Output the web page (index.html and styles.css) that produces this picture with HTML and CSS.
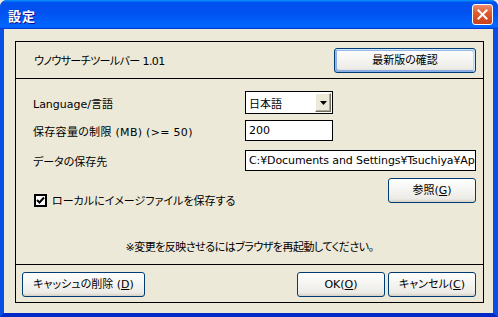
FILE: index.html
```html
<!DOCTYPE html>
<html lang="ja">
<head>
<meta charset="utf-8">
<link rel="stylesheet" href="styles.css">
</head>
<body>
<div class="window">
  <div class="titlebar">
    <span class="title">設定</span>
    <span class="close">
      <svg width="11" height="11" viewBox="0 0 11 11"><path d="M1.5 1.5 L9.5 9.5 M9.5 1.5 L1.5 9.5" stroke="#fff" stroke-width="2" stroke-linecap="square"/></svg>
    </span>
  </div>
  <div class="body">
    <div class="panel">
      <div class="sec sec-top">
        <span class="version">ウノウサーチツールバー 1.01</span>
        <button class="btn btn-default btn-check">最新版の確認</button>
      </div>
      <div class="sec sec-mid">
        <div class="row row-lang">
          <span class="label">Language/言語</span>
          <div class="select">
            <span class="select-text">日本語</span>
            <span class="select-arrow"><svg width="7" height="4" viewBox="0 0 7 4"><path d="M0 0 H7 L3.5 4 Z" fill="#000"/></svg></span>
          </div>
        </div>
        <div class="row row-size">
          <span class="label">保存容量の制限 (MB) (&gt;= 50)</span>
          <div class="input input-short">200</div>
        </div>
        <div class="row row-path">
          <span class="label">データの保存先</span>
          <div class="input input-long">C:¥Documents and Settings¥Tsuchiya¥Ap</div>
        </div>
        <div class="row row-check">
          <label class="check">
            <span class="box"><svg width="9" height="9" viewBox="0 0 9 9"><path d="M1 4 L3.5 6.5 L8 1.5" stroke="#000" stroke-width="2" fill="none"/></svg></span>
            <span>ローカルにイメージファイルを保存する</span>
          </label>
          <button class="btn btn-ref">参照(<u>G</u>)</button>
        </div>
        <p class="note">※変更を反映させるにはブラウザを再起動してください。</p>
      </div>
      <div class="sec sec-bottom">
        <button class="btn btn-cache">キャッシュの削除 (<u>D</u>)</button>
        <div class="right-buttons">
          <button class="btn btn-std">OK(<u>O</u>)</button>
          <button class="btn btn-std">キャンセル(<u>C</u>)</button>
        </div>
      </div>
    </div>
  </div>
</div>
</body>
</html>
```
FILE: styles.css
```css
html, body {
  margin: 0;
  padding: 0;
  width: 498px;
  height: 317px;
  overflow: hidden;
  background: #ece9d8;
}
.window {
  width: 498px;
  height: 317px;
  display: flex;
  flex-direction: column;
  font-family: "DejaVu Sans", "Noto Sans CJK JP", sans-serif;
  font-size: 11px;
  font-feature-settings: "palt";
  color: #000;
  background: #0842d7;
  border-radius: 7px 7px 0 0;
  overflow: hidden;
}
.titlebar {
  height: 29px;
  flex: none;
  display: flex;
  align-items: center;
  justify-content: space-between;
  padding: 0 5px 0 8px;
  background: linear-gradient(180deg, #0997ff, #0053ee 8%, #0050ee 40%, #06f 88%, #06f 93%, #005bff 95%, #003dd7 96%, #003dd7);
}
.title {
  color: #fff;
  font-weight: bold;
  font-size: 13px;
  font-family: "Noto Sans CJK JP", sans-serif;
  text-shadow: 1px 1px #0f1089;
  letter-spacing: 1px;
  margin-top: 1px;
}
.close {
  width: 21px;
  height: 21px;
  box-sizing: border-box;
  border: 1px solid #fff;
  border-radius: 3px;
  background: linear-gradient(180deg, #ec8d6d, #dc5d30 40%, #c8411b 100%);
  display: flex;
  align-items: center;
  justify-content: center;
  margin-top: -1px;
}
.body {
  flex: 1;
  display: flex;
  flex-direction: column;
  background: #ece9d8;
  border-left: 4px solid #0a4fe4;
  border-right: 5px solid #0a4fe4;
  border-bottom: 4px solid #0029c6;
}
.panel {
  flex: 1;
  margin: 12px 9px 10px 11px;
  border: 1px solid #000;
  display: flex;
  flex-direction: column;
}
.sec-top {
  height: 36px;
  flex: none;
  display: flex;
  align-items: center;
  justify-content: space-between;
  padding: 0 7px 0 18px;
  border-bottom: 1px solid #000;
}
.version {
  margin-top: -1px;
  letter-spacing: -0.6px;
}
.btn {
  font: inherit;
  color: #000;
  box-sizing: border-box;
  height: 25px;
  border: 1px solid #003c74;
  border-radius: 3px;
  background: linear-gradient(180deg, #fff, #ecebe6 86%, #d6d0c5);
  padding: 0;
  margin: 0;
  line-height: 1;
}
.btn u {
  text-decoration: underline;
  text-underline-offset: 1px;
}
.btn-default {
  box-shadow: inset -1px 1px #cee7ff, inset 1px 2px #98b8ea, inset -2px 2px #bcd4f6, inset 1px -1px #89ade4, inset 2px -2px #89ade4;
}
.btn-check {
  width: 142px;
  margin-top: 1px;
}
.sec-mid {
  flex: 1;
  display: flex;
  flex-direction: column;
  padding: 12px 7px 0 17px;
  border-bottom: 1px solid #000;
}
.row {
  display: flex;
  align-items: center;
}
.label {
  width: 212px;
  flex: none;
}
.row-lang {
  height: 23px;
}
.row-size {
  height: 21px;
  margin-top: 6px;
}
.row-size .label {
  letter-spacing: 0.3px;
}
.row-path {
  height: 21px;
  margin-top: 9px;
}
.row-check {
  margin-top: 7px;
  align-items: flex-start;
  justify-content: space-between;
}
.select {
  width: 88px;
  height: 23px;
  box-sizing: border-box;
  border: 1px solid #000;
  background: #fff;
  display: flex;
  align-items: center;
  justify-content: space-between;
  padding: 0 1px 0 3px;
}
.select-arrow {
  width: 16px;
  height: 19px;
  box-sizing: border-box;
  background: #ece9d8;
  border: 1px solid;
  border-color: #fff #716f64 #716f64 #fff;
  box-shadow: inset -1px -1px #aca899;
  display: flex;
  align-items: center;
  justify-content: center;
}
.input {
  height: 21px;
  box-sizing: border-box;
  border: 1px solid #000;
  background: #fff;
  padding: 0 3px;
  display: flex;
  align-items: center;
  white-space: nowrap;
  overflow: hidden;
}
.input-short {
  width: 88px;
}
.input-long {
  width: 232px;
  letter-spacing: -0.1px;
}
.check {
  display: flex;
  align-items: center;
  gap: 5px;
  margin-top: 14px;
  margin-left: 1px;
}
.box {
  width: 13px;
  height: 13px;
  box-sizing: border-box;
  border: 2px solid #000;
  background: #fff;
  display: flex;
  align-items: center;
  justify-content: center;
}
.btn-ref {
  width: 88px;
}
.note {
  margin: 30px 0 0 -17px;
  width: 467px;
  text-align: center;
  letter-spacing: -0.5px;
}
.sec-bottom {
  height: 37px;
  flex: none;
  display: flex;
  align-items: flex-start;
  justify-content: space-between;
  padding: 7px 7px 0 6px;
  box-sizing: border-box;
}
.btn-cache {
  width: 123px;
}
.right-buttons {
  display: flex;
  gap: 3px;
}
.btn-std {
  width: 88px;
}
```
